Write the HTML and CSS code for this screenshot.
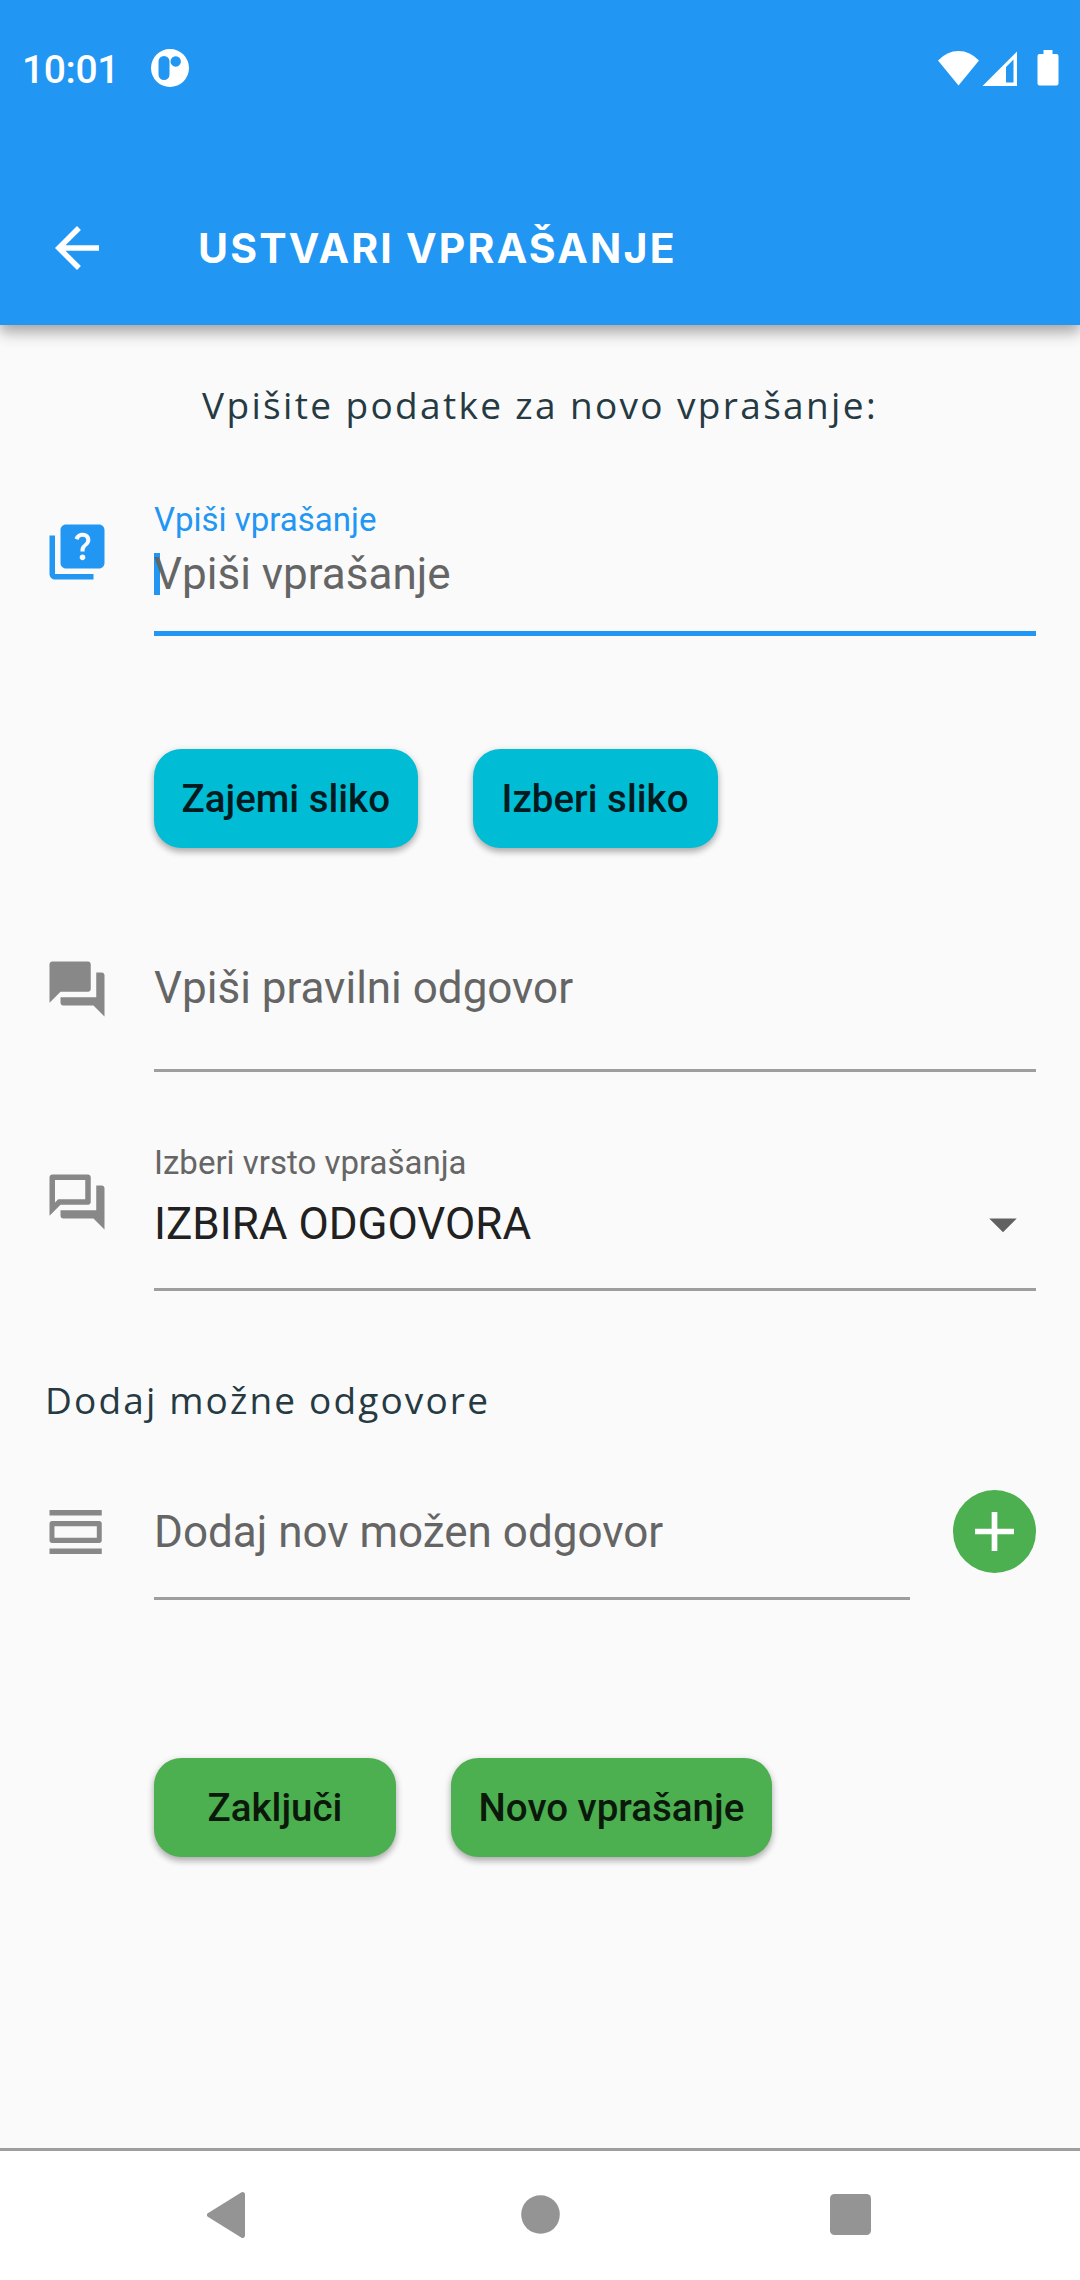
FILE: index.html
```html
<!DOCTYPE html>
<html lang="sl">
<head>
<meta charset="utf-8">
<title>Ustvari vprašanje</title>
<link rel="stylesheet" href="styles.css">
</head>
<body>
<header class="header">
  <div class="status">
    <span class="time">10:01</span>
    <svg class="status-app" width="38" height="38" viewBox="0 0 38 38"><path fill="#fff" fill-rule="evenodd" d="M19 0a19 19 0 1 1 0 38a19 19 0 1 1 0-38zM13 7a5.5 5.5 0 0 0-5.500 5.500v13a5.500 5.500 0 0 0 11 0v-13A5.500 5.500 0 0 0 13 7zM24.700 7.300a5.200 5.200 0 1 0 .01 0z"/></svg>
    <svg class="status-icons" width="122" height="38" viewBox="0 0 122 38" fill="#fff"><path d="M0 11.500Q9 2 20.500 2T41 11.500L20.500 36.500z"/><path fill-rule="evenodd" d="M79 2.500V37H44.500zM75.500 10.500L68 18v15.500h7.500z"/><path d="M105.500 1h9v4h4q2 0 2 2v27.500q0 2-2 2h-17q-2 0-2-2V7q0-2 2-2h4z"/></svg>
  </div>
  <div class="toolbar">
    <svg width="66" height="66" viewBox="0 0 24 24" fill="#fff"><path d="M20 11H7.830l5.590-5.590L12 4l-8 8 8 8 1.410-1.410L7.830 13H20v-2z"/></svg>
    <h1 class="title">USTVARI VPRAŠANJE</h1>
  </div>
</header>
<main class="form">
  <p class="hint">Vpišite podatke za novo vprašanje:</p>

  <div class="field focused">
    <svg class="icon" width="66" height="66" viewBox="0 0 24 24"><path fill="#2196f3" d="M4 6H2v14c0 1.100.9 2 2 2h14v-2H4V6zM20 2H8c-1.100 0-2 .9-2 2v12c0 1.100.9 2 2 2h12c1.100 0 2-.9 2-2V4c0-1.100-.9-2-2-2z"/><path fill="#fafafa" d="M14.010 15c-.59 0-1.050-.47-1.050-1.050 0-.59.47-1.040 1.050-1.040.59 0 1.040.45 1.040 1.040-.01.58-.45 1.050-1.040 1.050zm2.510-6.170c-.63.93-1.230 1.210-1.560 1.810-.13.24-.18.4-.18 1.180h-1.520c0-.41-.06-1.080.26-1.650.41-.73 1.180-1.160 1.630-1.800.48-.68.21-1.940-1.140-1.940-.88 0-1.320.67-1.500 1.230l-1.370-.57C11.510 5.960 12.520 5 13.990 5c1.230 0 2.080.56 2.510 1.260.37.61.58 1.730.02 2.570z"/></svg>
    <div class="control">
      <span class="label">Vpiši vprašanje</span>
      <span class="value placeholder">Vpiši vprašanje</span>
    </div>
  </div>

  <div class="buttons images">
    <button class="btn cyan">Zajemi sliko</button>
    <button class="btn cyan">Izberi sliko</button>
  </div>

  <div class="field answer">
    <svg class="icon" width="66" height="66" viewBox="0 0 24 24" fill="#888"><path d="M21 6h-2v9H6v2c0 .55.45 1 1 1h11l4 4V7c0-.55-.45-1-1-1zm-4 6V3c0-.55-.45-1-1-1H3c-.55 0-1 .45-1 1v14l4-4h10c.55 0 1-.45 1-1z"/></svg>
    <div class="control">
      <span class="value placeholder">Vpiši pravilni odgovor</span>
    </div>
  </div>

  <div class="field kind">
    <svg class="icon" width="66" height="66" viewBox="0 0 24 24" fill="#888"><path d="M15 4v7H5.170L4 12.170V4h11m1-2H3c-.55 0-1 .45-1 1v14l4-4h10c.55 0 1-.45 1-1V3c0-.55-.45-1-1-1zm5 4h-2v9H6v2c0 .55.45 1 1 1h11l4 4V7c0-.55-.45-1-1-1z"/></svg>
    <div class="control">
      <span class="label">Izberi vrsto vprašanja</span>
      <div class="select">
        <span class="value">IZBIRA ODGOVORA</span>
        <svg width="66" height="66" viewBox="0 0 24 24" fill="#616161"><path d="M7 10l5 5 5-5z"/></svg>
      </div>
    </div>
  </div>

  <h2 class="subtitle">Dodaj možne odgovore</h2>

  <div class="field option">
    <svg class="icon" width="66" height="66" viewBox="0 0 24 24" fill="#888"><path fill-rule="evenodd" d="M2 4h19v2H2zM2 18h19v2H2zM3 8h17q1 0 1 1v6q0 1-1 1H3q-1 0-1-1V9q0-1 1-1zM3.800 9.900v4.200h15.400V9.900z"/></svg>
    <div class="control">
      <span class="value placeholder">Dodaj nov možen odgovor</span>
    </div>
    <button class="add" aria-label="Dodaj"><svg width="83" height="83" viewBox="0 0 83 83"><path d="M41.500 22v39M22 41.500h39" stroke="#fff" stroke-width="5.700"/></svg></button>
  </div>

  <div class="buttons actions">
    <button class="btn green">Zaključi</button>
    <button class="btn green">Novo vprašanje</button>
  </div>
</main>
<nav class="nav">
  <svg width="39" height="46" viewBox="0 0 39 46"><path d="M35.500 2.500L2.500 23l33 20.500z" fill="#949494" stroke="#949494" stroke-width="5" stroke-linejoin="round"/></svg>
  <svg width="39" height="39" viewBox="0 0 39 39"><circle cx="19.500" cy="19.500" r="19.300" fill="#949494"/></svg>
  <svg width="41" height="41" viewBox="0 0 41 41"><rect width="41" height="41" rx="4.500" fill="#949494"/></svg>
</nav>
</body>
</html>
```
FILE: styles.css
```css
* { box-sizing: border-box; }
body {
  margin: 0;
  width: 1080px;
  height: 2280px;
  display: flex;
  flex-direction: column;
  background: #fafafa;
  color: #212121;
  font-family: Roboto, sans-serif;
  overflow: hidden;
}
svg { display: block; flex: none; }
h1, h2, p { margin: 0; }

.header {
  height: 325px;
  flex: none;
  background: #2196f3;
  color: #fff;
  box-shadow: 0 5px 11px rgba(0, 0, 0, .2), 0 11px 14px rgba(0, 0, 0, .12), 0 3px 22px rgba(0, 0, 0, .08);
}
.status {
  height: 135px;
  display: flex;
  align-items: center;
  padding: 0 20px 0 22px;
}
.time {
  width: 129px;
  font-size: 39px;
  font-weight: 500;
  line-height: 46px;
  letter-spacing: -.4px;
  padding-top: 4px;
}
.status-icons { margin-left: auto; }
.toolbar {
  height: 66px;
  margin-top: 80px;
  padding-left: 44px;
  display: flex;
  align-items: center;
  gap: 88px;
}
.title {
  font: 700 41px/50px Inter, sans-serif;
  letter-spacing: 2.200px;
  white-space: nowrap;
}

.form { flex: 1; padding: 55px 44px 0; }
.hint, .subtitle {
  font: 400 37px/50px "Open Sans", sans-serif;
  letter-spacing: 2.350px;
  color: #263a43;
  white-space: nowrap;
}
.hint { text-align: center; }
.subtitle { margin-top: 84px; letter-spacing: 2.150px; padding-left: 1px; }

.field { display: flex; align-items: flex-start; }
.control {
  flex: 1;
  margin-left: 44px;
  display: flex;
  flex-direction: column;
  border-bottom: 3px solid #9e9e9e;
}
.label { font-size: 33px; line-height: 39px; color: #666; }
.value { font-size: 44px; line-height: 52px; white-space: nowrap; }
.placeholder { color: #656565; }

.focused { height: 136px; margin-top: 70px; }
.focused .icon { margin-top: 18.500px; }
.focused .control { height: 136px; border-bottom: 5.500px solid #2196f3; }
.focused .label { color: #2196f3; }
.focused .value {
  margin-top: 9px;
  background: linear-gradient(#2196f3, #2196f3) 0 5px / 6px 42px no-repeat;
}

.answer { height: 117px; margin-top: 107px; }
.answer .icon { margin-top: 1px; }
.answer .control { height: 117px; padding-top: 7px; }

.kind { height: 149px; margin-top: 70px; }
.kind .icon { margin-top: 27px; }
.kind .control { height: 149px; padding-top: 1px; }
.select {
  display: flex;
  justify-content: space-between;
  align-items: center;
  height: 66px;
  margin-top: 9px;
}

.option { height: 110px; margin-top: 65px; }
.option .icon { margin-top: 9px; }
.option .control { height: 110px; padding-top: 16px; }
.add {
  width: 83px;
  height: 83px;
  margin-left: 43px;
  padding: 0;
  border: 0;
  border-radius: 50%;
  background: #4caf50;
}

.buttons { display: flex; gap: 55px; margin-left: 110px; }
.images { margin-top: 113px; }
.actions { margin-top: 158px; }
.btn {
  height: 99px;
  min-width: 242px;
  padding: 0 27.500px;
  border: 0;
  border-radius: 27.500px;
  font: 500 38.500px/46px Roboto, sans-serif;
  white-space: nowrap;
  box-shadow: 0 4px 6px rgba(0, 0, 0, .24), 0 2px 8px rgba(0, 0, 0, .12);
}
.cyan { min-width: 245px; background: #00bcd4; color: #001b1f; }
.green { background: #4caf50; color: #0b190b; }

.nav {
  height: 132px;
  flex: none;
  border-top: 3px solid #9e9e9e;
  background: #fff;
  display: grid;
  grid-template-columns: 39px 39px 41px;
  column-gap: 275px;
  align-items: center;
  padding: 0 0 2px 207px;
}
.nav svg:last-child { margin-left: -5px; }
```
